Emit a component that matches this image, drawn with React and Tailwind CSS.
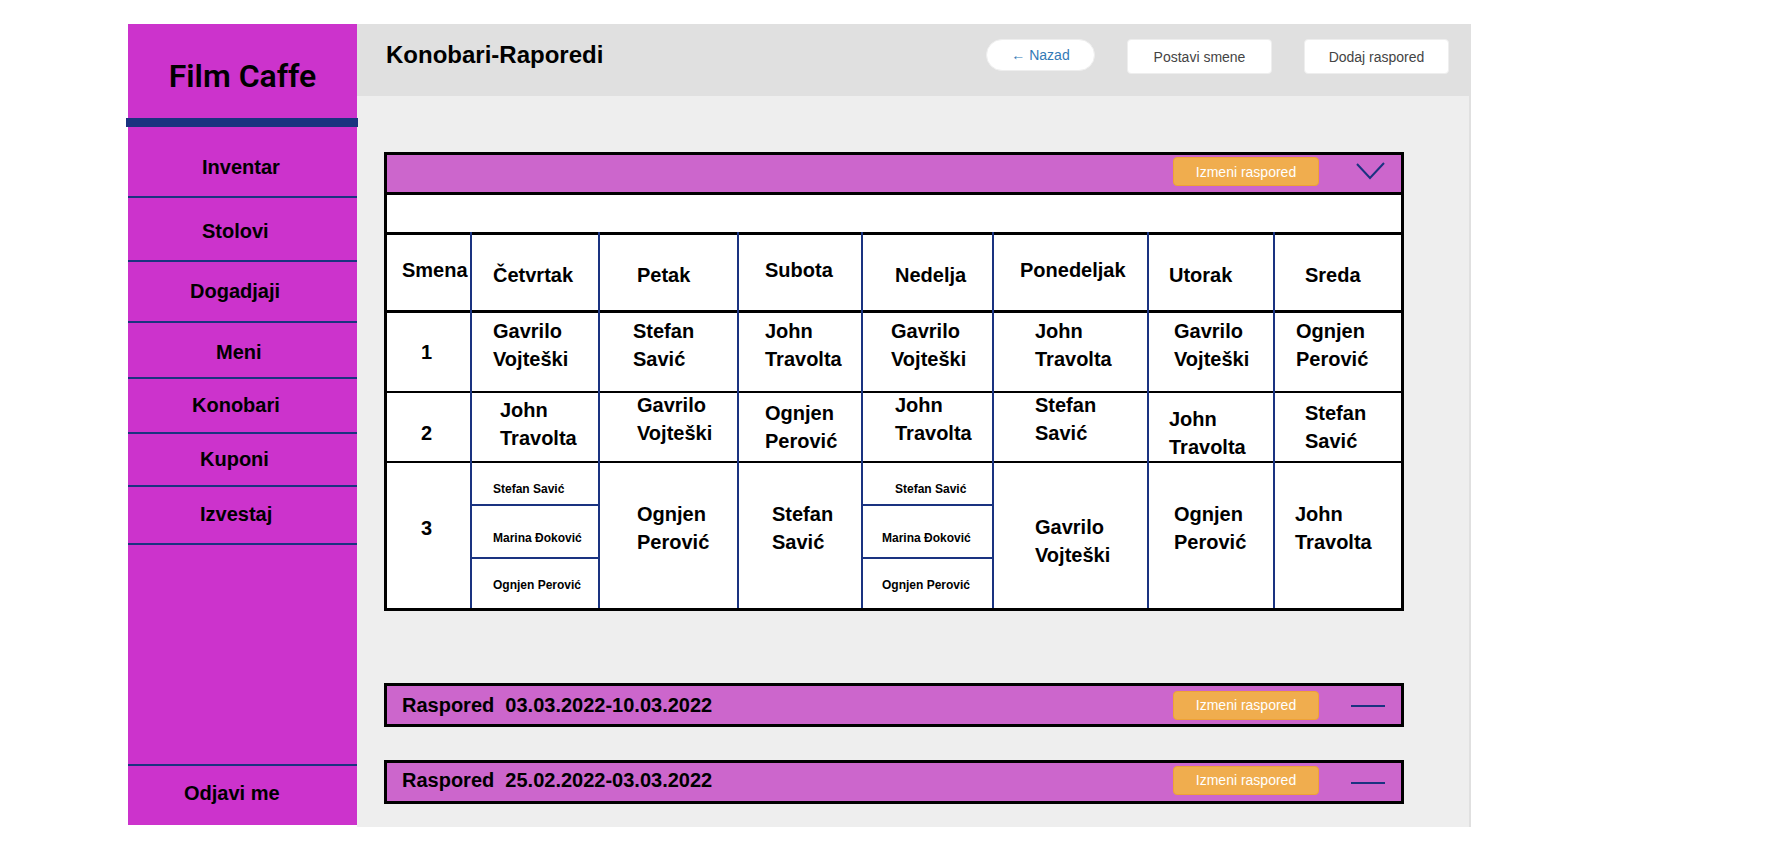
const navItems = [
  { label: 'Inventar', box: 'h-[71px] pt-[26px] pl-[74px]' },
  { label: 'Stolovi', box: 'h-16 pt-[19px] pl-[74px]' },
  { label: 'Dogadjaji', box: 'h-[61px] pt-[15px] pl-[62px]' },
  { label: 'Meni', box: 'h-14 pt-[15px] pl-[88px]' },
  { label: 'Konobari', box: 'h-[55px] pt-3 pl-16' },
  { label: 'Kuponi', box: 'h-[53px] pt-[11px] pl-[72px]' },
  { label: 'Izvestaj', box: 'h-[58px] pt-[13px] pl-[72px]' },
];

const columns = [
  'w-[83px]',
  'w-[128px]',
  'w-[139px]',
  'w-[124px]',
  'w-[131px]',
  'w-[155px]',
  'w-[126px]',
  'w-[128px]',
];

const days = [
  { label: 'Smena', pad: 'pt-[26px] pl-[15px]' },
  { label: 'Četvrtak', pad: 'pt-[31px] pl-[21px]' },
  { label: 'Petak', pad: 'pt-[31px] pl-[37px]' },
  { label: 'Subota', pad: 'pt-[26px] pl-[26px]' },
  { label: 'Nedelja', pad: 'pt-[31px] pl-8' },
  { label: 'Ponedeljak', pad: 'pt-[26px] pl-[26px]' },
  { label: 'Utorak', pad: 'pt-[31px] pl-5' },
  { label: 'Sreda', pad: 'pt-[31px] pl-[30px]' },
];

const splitShift = (firstPad, pad) => [
  { name: 'Stefan Savić', box: 'h-[43px] pt-[18px] border-b-2 ' + firstPad },
  { name: 'Marina Đoković', box: 'h-[53px] pt-6 border-b-2 ' + pad },
  { name: 'Ognjen Perović', box: 'h-[49px] pt-[18px] ' + pad },
];

const shifts = [
  {
    number: '1',
    height: 'h-20',
    pad: 'pt-[27px]',
    line: 'shadow-[inset_0_-2px_0_#000]',
    cells: [
      { name: ['Gavrilo', 'Vojteški'], pad: 'pt-1.5 pl-[21px]' },
      { name: ['Stefan', 'Savić'], pad: 'pt-1.5 pl-[33px]' },
      { name: ['John', 'Travolta'], pad: 'pt-1.5 pl-[26px]' },
      { name: ['Gavrilo', 'Vojteški'], pad: 'pt-1.5 pl-7' },
      { name: ['John', 'Travolta'], pad: 'pt-1.5 pl-[41px]' },
      { name: ['Gavrilo', 'Vojteški'], pad: 'pt-1.5 pl-[25px]' },
      { name: ['Ognjen', 'Perović'], pad: 'pt-1.5 pl-[21px]' },
    ],
  },
  {
    number: '2',
    height: 'h-[70px]',
    pad: 'pt-7',
    line: 'shadow-[inset_0_-2px_0_#000]',
    cells: [
      { name: ['John', 'Travolta'], pad: 'pt-[5px] pl-7' },
      { name: ['Gavrilo', 'Vojteški'], pad: 'pl-[37px]' },
      { name: ['Ognjen', 'Perović'], pad: 'pt-2 pl-[26px]' },
      { name: ['John', 'Travolta'], pad: 'pl-8' },
      { name: ['Stefan', 'Savić'], pad: 'pl-[41px]' },
      { name: ['John', 'Travolta'], pad: 'pt-3.5 pl-5' },
      { name: ['Stefan', 'Savić'], pad: 'pt-2 pl-[30px]' },
    ],
  },
  {
    number: '3',
    height: 'h-[145px]',
    pad: 'pt-[53px]',
    line: '',
    cells: [
      { split: splitShift('pl-[21px]', 'pl-[21px]') },
      { name: ['Ognjen', 'Perović'], pad: 'pt-[39px] pl-[37px]' },
      { name: ['Stefan', 'Savić'], pad: 'pt-[39px] pl-[33px]' },
      { split: splitShift('pl-8', 'pl-[19px]') },
      { name: ['Gavrilo', 'Vojteški'], pad: 'pt-[52px] pl-[41px]' },
      { name: ['Ognjen', 'Perović'], pad: 'pt-[39px] pl-[25px]' },
      { name: ['John', 'Travolta'], pad: 'pt-[39px] pl-5' },
    ],
  },
];

function Sidebar() {
  return (
    <aside className="mb-0.5 flex w-[229px] shrink-0 flex-col bg-[#cc33cc]">
      <div className="h-[94px] pt-8 text-center font-[Roboto,sans-serif] text-[32px] leading-10 font-semibold">
        Film Caffe
      </div>
      <div className="relative -mr-px -ml-0.5 h-[9px] bg-[#1a3380]" />
      <nav className="flex flex-1 flex-col text-xl leading-7">
        {navItems.map((item) => (
          <a key={item.label} href="#" className={'block border-b-2 border-[#1a3380] ' + item.box}>
            {item.label}
          </a>
        ))}
        <a href="#" className="mt-auto block h-[61px] border-t-2 border-[#1a3380] pt-[13px] pl-14">
          Odjavi me
        </a>
      </nav>
    </aside>
  );
}

function TopBar() {
  return (
    <header className="-mr-0.5 flex h-[72px] items-start gap-8 bg-[#e0e0e0] pt-[15px] pr-[22px] pl-[29px]">
      <h1 className="mr-auto text-2xl leading-8">Konobari-Raporedi</h1>
      <button className="h-8 w-[109px] rounded-full border border-[#eeeeee] bg-white text-sm font-normal text-[#337ab7]">
        ← Nazad
      </button>
      <button className="h-[35px] w-[145px] rounded border border-[#eeeeee] bg-white text-sm font-normal text-[#444444]">
        Postavi smene
      </button>
      <button className="h-[35px] w-[145px] rounded border border-[#eeeeee] bg-white text-sm font-normal text-[#444444]">
        Dodaj raspored
      </button>
    </header>
  );
}

function ScheduleBar({ title, open, pad, height }) {
  return (
    <div className={'flex items-center gap-8 bg-[#cc66cc] pr-4 pl-[15px] ' + height}>
      <h2 className={'mr-auto text-xl leading-7 whitespace-pre ' + pad}>{title}</h2>
      <div className={pad}>
        <button className="block h-[29px] w-[146px] rounded border border-[#eea236] bg-[#f0ad4e] text-sm font-normal text-white">
          Izmeni raspored
        </button>
      </div>
      <button aria-label={open ? 'Zatvori raspored' : 'Otvori raspored'} aria-expanded={open}>
        <svg width="34" height="24" viewBox="0 0 34 24" fill="none" stroke="#1a3380" strokeWidth="2">
          {open ? <path d="M6 2L19 16L33 1" /> : <path d="M0 13H34" />}
        </svg>
      </button>
    </div>
  );
}

function ShiftCell({ cell, line }) {
  if (cell.split) {
    return (
      <td className="border-l-2 border-[#1a3380] p-0 align-top text-xs leading-4">
        {cell.split.map((part) => (
          <div key={part.name} className={'border-[#1a3380] whitespace-nowrap ' + part.box}>
            {part.name}
          </div>
        ))}
      </td>
    );
  }
  return (
    <td className={'border-l-2 border-[#1a3380] align-top ' + line + ' ' + cell.pad}>
      <div className="flex flex-col gap-1">
        {cell.name.map((part) => (
          <span key={part}>{part}</span>
        ))}
      </div>
    </td>
  );
}

function ShiftTable() {
  return (
    <table className="w-full table-fixed border-separate border-spacing-0 bg-white text-xl leading-6">
      <colgroup>
        {columns.map((width, i) => (
          <col key={i} className={width} />
        ))}
      </colgroup>
      <thead>
        <tr className="h-[81px]">
          {days.map((day, i) => (
            <th
              key={day.label}
              scope="col"
              className={
                'border-[#1a3380] text-left align-top shadow-[inset_0_3px_0_#000,inset_0_-3px_0_#000] ' +
                (i > 0 ? 'border-l-2 ' : '') +
                day.pad
              }
            >
              {day.label}
            </th>
          ))}
        </tr>
      </thead>
      <tbody>
        {shifts.map((shift) => (
          <tr key={shift.number} className={shift.height}>
            <th scope="row" className={'pl-[34px] text-left align-top ' + shift.line + ' ' + shift.pad}>
              {shift.number}
            </th>
            {shift.cells.map((cell, i) => (
              <ShiftCell key={i} cell={cell} line={shift.line} />
            ))}
          </tr>
        ))}
      </tbody>
    </table>
  );
}

export default function App() {
  return (
    <div className="flex min-h-screen items-start bg-white pt-6 pr-[319px] pl-32 font-['Liberation_Sans',Arial,sans-serif] font-bold text-black">
      <div className="flex min-w-0 flex-1 items-stretch">
        <Sidebar />
        <main className="min-w-0 flex-1 border-r-2 border-[#e0e0e0] bg-[#eeeeee]">
          <TopBar />
          <div className="pt-14 pr-[65px] pb-[23px] pl-[27px] [&_h2]:font-bold">
            <section className="mb-[72px] border-3 border-black">
              <ScheduleBar title="" open pad="pb-1" height="h-[37px]" />
              <div className="h-10 border-t-3 border-black bg-white" />
              <ShiftTable />
            </section>
            <section className="mb-[33px] border-3 border-black">
              <ScheduleBar title="Raspored  03.03.2022-10.03.2022" open={false} pad="" height="h-[38px]" />
            </section>
            <section className="border-3 border-black">
              <ScheduleBar title="Raspored  25.02.2022-03.03.2022" open={false} pad="pb-1" height="h-[38px]" />
            </section>
          </div>
        </main>
      </div>
    </div>
  );
}
